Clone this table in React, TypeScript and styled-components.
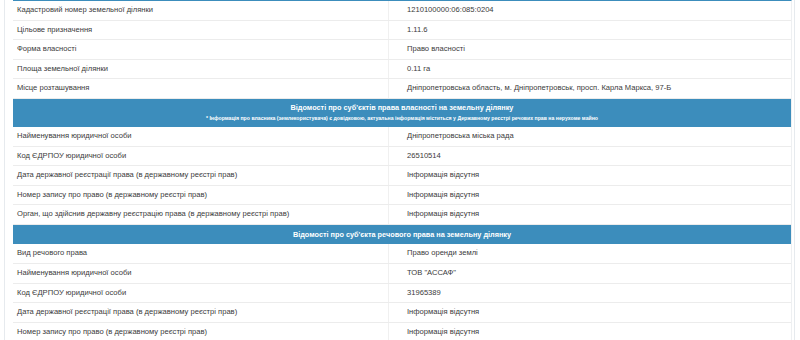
import React from "react";
import styled, { createGlobalStyle } from "styled-components";

const Global = createGlobalStyle`
  html, body { margin: 0; padding: 0; background: #ffffff; }
  body { font-family: "Liberation Sans", Arial, sans-serif; color: #333; }
`;

const Panel = styled.div`
  width: 791px;
  margin-left: 4px;
  border-left: 1px solid #e6eaee;
  border-right: 1px solid #e6eaee;
  padding: 0 4px 0 8px;
  box-sizing: border-box;
  height: 340px;
  overflow: hidden;
`;

const Table = styled.div`
  width: 778px;
  border-top: 1px solid #3c8dbc;
  border-right: 1px solid #eef0f2;
`;

const Row = styled.div`
  display: grid;
  grid-template-columns: 375px 1fr;
  height: 19.6px;
  box-sizing: border-box;
  border-bottom: 1px solid #ececec;
  font-size: 7.6px;
  line-height: 18.6px;
  color: #3a3a3a;
`;

const Label = styled.div`
  padding-left: 4px;
  white-space: nowrap;
`;

const Value = styled.div`
  padding-left: 18px;
  border-left: 1px solid #f0f0f0;
  white-space: nowrap;
`;

const Header = styled.div<{ $tall?: boolean }>`
  background: #3c8dbc;
  color: #ffffff;
  text-align: center;
  height: ${(p) => (p.$tall ? "28px" : "19.5px")};
  box-sizing: border-box;
  padding-top: ${(p) => (p.$tall ? "3px" : "0")};
  display: flex;
  flex-direction: column;
  justify-content: ${(p) => (p.$tall ? "flex-start" : "center")};
`;

const HeaderTitle = styled.div`
  font-size: 7.3px;
  font-weight: bold;
  line-height: 12px;
`;

const HeaderNote = styled.div`
  font-size: 5.2px;
  font-weight: bold;
  line-height: 9px;
`;

type Item = [string, string];

const land: Item[] = [
  ["Кадастровий номер земельної ділянки", "1210100000:06:085:0204"],
  ["Цільове призначення", "1.11.6"],
  ["Форма власності", "Право власності"],
  ["Площа земельної ділянки", "0.11 га"],
  ["Місце розташування", "Дніпропетровська область, м. Дніпропетровськ, просп. Карла Маркса, 97-Б"],
];

const owners: Item[] = [
  ["Найменування юридичної особи", "Дніпропетровська міська рада"],
  ["Код ЄДРПОУ юридичної особи", "26510514"],
  ["Дата державної реєстрації права (в державному реєстрі прав)", "Інформація відсутня"],
  ["Номер запису про право (в державному реєстрі прав)", "Інформація відсутня"],
  ["Орган, що здійснив державну реєстрацію права (в державному реєстрі прав)", "Інформація відсутня"],
];

const rights: Item[] = [
  ["Вид речового права", "Право оренди землі"],
  ["Найменування юридичної особи", "ТОВ \"АССАФ\""],
  ["Код ЄДРПОУ юридичної особи", "31965389"],
  ["Дата державної реєстрації права (в державному реєстрі прав)", "Інформація відсутня"],
  ["Номер запису про право (в державному реєстрі прав)", "Інформація відсутня"],
];

const Rows = ({ items }: { items: Item[] }) => (
  <>
    {items.map(([l, v], i) => (
      <Row key={i}>
        <Label>{l}</Label>
        <Value>{v}</Value>
      </Row>
    ))}
  </>
);

export default function App() {
  return (
    <>
      <Global />
      <Panel>
        <Table>
          <Rows items={land} />
          <Header $tall>
            <HeaderTitle>Відомості про суб'єктів права власності на земельну ділянку</HeaderTitle>
            <HeaderNote>
              * Інформація про власника (землекористувача) є довідковою, актуальна інформація міститься у Державному реєстрі речових прав на нерухоме майно
            </HeaderNote>
          </Header>
          <Rows items={owners} />
          <Header>
            <HeaderTitle>Відомості про суб'єкта речового права на земельну ділянку</HeaderTitle>
          </Header>
          <Rows items={rights} />
        </Table>
      </Panel>
    </>
  );
}
